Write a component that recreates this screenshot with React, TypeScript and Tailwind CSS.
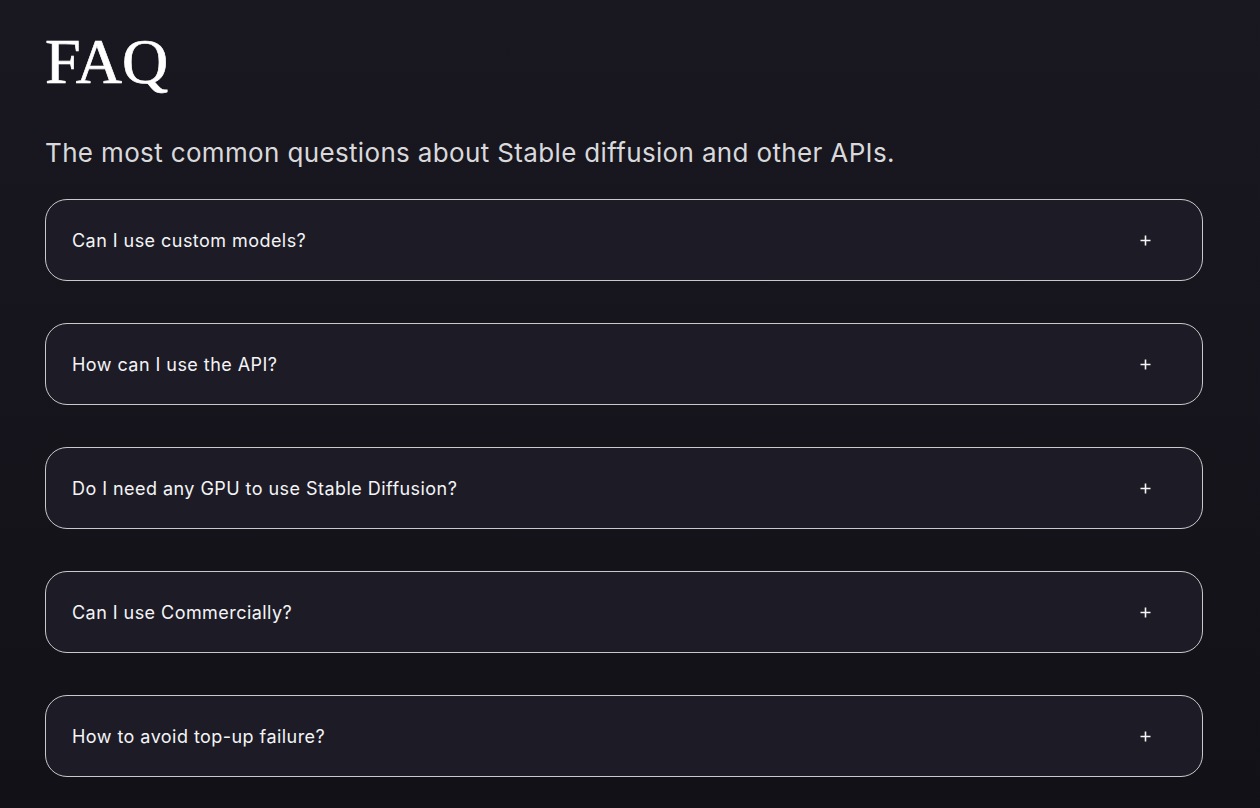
import * as React from "react"

const questions = [
  "Can I use custom models?",
  "How can I use the API?",
  "Do I need any GPU to use Stable Diffusion?",
  "Can I use Commercially?",
  "How to avoid top-up failure?",
]

function PlusIcon() {
  return (
    <svg width="11" height="11" viewBox="0 0 11 11" fill="none" stroke="#f5f5f5" strokeWidth="1.6">
      <path d="M5.5 0.5v10M0.5 5.5h10" />
    </svg>
  )
}

function FaqItem({ question }: { question: string }) {
  const [open, setOpen] = React.useState(false)
  return (
    <button
      type="button"
      onClick={() => setOpen((o) => !o)}
      className="flex h-[82px] w-full items-center justify-between rounded-[22px] border border-[#c9c9cc] bg-[#1d1c26] pl-[26px] pr-[51px] text-left"
    >
      <span className="text-[18px] text-[#f4f4f6] tracking-[0.45px]">{question}</span>
      <PlusIcon />
    </button>
  )
}

export default function App() {
  return (
    <div
      className="min-h-[808px] w-full bg-gradient-to-b from-[#191820] to-[#121118] px-[45px] pt-[26px] pb-8"
      style={{ fontFamily: "Inter, 'Noto Sans', sans-serif" }}
    >
      <h1
        className="text-[64px] leading-[72px] text-white [-webkit-text-stroke:0.7px_white]"
        style={{ fontFamily: "'Liberation Serif', 'DejaVu Serif', serif" }}
      >
        FAQ
      </h1>
      <p className="mt-[38px] text-[26px] leading-[34px] tracking-[0.35px] text-[#d9d9dc]">
        The most common questions about Stable diffusion and other APIs.
      </p>
      <div className="mt-[29px] flex w-[1158px] flex-col gap-[42px]">
        {questions.map((q) => (
          <FaqItem key={q} question={q} />
        ))}
      </div>
    </div>
  )
}
